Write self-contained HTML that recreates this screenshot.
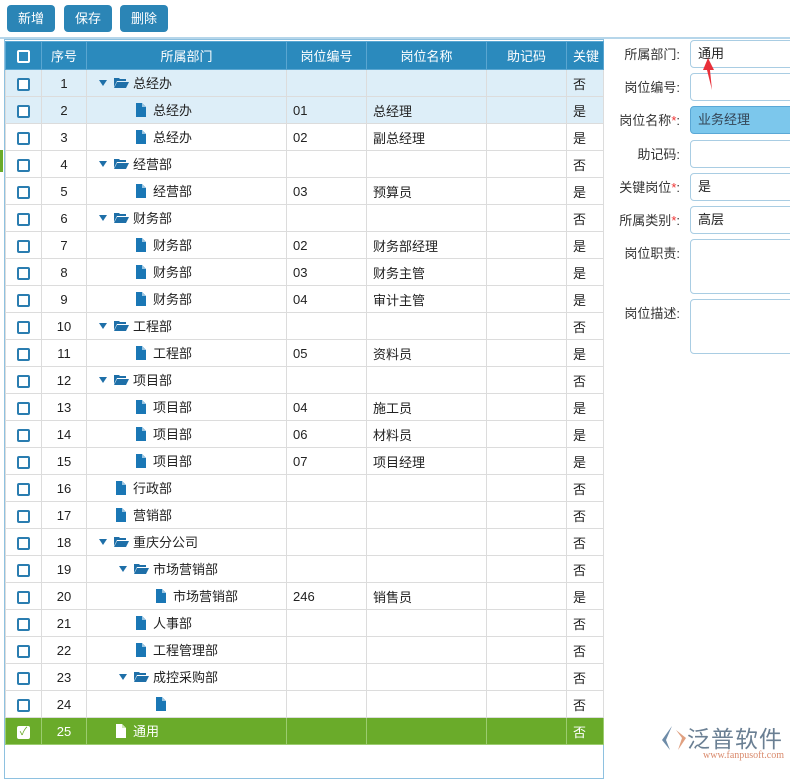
<!DOCTYPE html>
<html><head><meta charset="utf-8"><style>
*{box-sizing:border-box;margin:0;padding:0}
body{width:790px;height:771px;overflow:hidden;background:#fff;font-family:"Liberation Sans","Noto Sans CJK SC",sans-serif;font-size:13px;color:#222;position:relative}
.btn{position:absolute;top:5px;height:27px;width:48px;background:#2b85b6;color:#fff;border-radius:4px;text-align:center;line-height:27px;font-size:13px}
.topline{position:absolute;left:0;top:37px;width:790px;height:2px;background:#b6d6ea}
.panel{position:absolute;left:4px;top:39px;width:600px;height:740px;border:1px solid #8ec1e0}
table{position:absolute;left:5px;top:41px;border-collapse:collapse;table-layout:fixed;width:598px}
td,th{border:1px solid #dcdcdc;height:27px;padding:0;white-space:nowrap;overflow:hidden}
th{background:#2b8abd;color:#fff;font-weight:normal;height:28px;border-color:#5aa6d1}
td.c{text-align:center}
td.t{padding-left:6px}
.cb{display:inline-block;width:13px;height:13px;border:2px solid #2a7db0;border-radius:2px;vertical-align:middle;background:#fff}
th .cb{border-color:#fff;background:transparent}
tr.b td{background:#ddeef8}
tr.g td{background:#6aab2a;color:#fff;border-color:#9ccc70}
.d{position:relative}
.d span{position:absolute;top:0;line-height:27px}
.d span.x{top:6px;line-height:0}
.ar{width:0;height:0;border-left:4px solid transparent;border-right:4px solid transparent;border-top:6px solid #1e6fa8;top:10px!important}
.ar,.fo,.fi{display:block}
</style></head><body>
<div class="btn" style="left:7px">新增</div>
<div class="btn" style="left:64px">保存</div>
<div class="btn" style="left:120px">删除</div>
<div class="topline"></div>
<div style="position:absolute;left:0;top:150px;width:3px;height:22px;background:#6aab2a"></div>
<div class="panel"></div>
<table>
<colgroup><col style="width:36px"><col style="width:45px"><col style="width:200px"><col style="width:80px"><col style="width:120px"><col style="width:80px"><col style="width:37px"></colgroup>
<tr><th><span class="cb"></span></th><th>序号</th><th>所属部门</th><th>岗位编号</th><th>岗位名称</th><th>助记码</th><th style="text-align:left;padding-left:6px">关键</th></tr>
<tr class="b"><td class="c"><span class="cb"></span></td><td class="c">1</td><td class="d"><span class="ar" style="left:12px"></span><span class="x" style="left:27px;top:7px"><svg width="15" height="11"><path d="M0 1h5l1 1h6v2H3L0 10z M3 5h12l-3 6H0z" fill="#1e6fa8"/></svg></span><span style="left:46px">总经办</span></td><td></td><td></td><td></td><td class="t">否</td></tr>
<tr class="b"><td class="c"><span class="cb"></span></td><td class="c">2</td><td class="d"><span class="x" style="left:49px"><svg width="10" height="14"><path d="M0 0h6l4 4v10H0z" fill="#1a77b5"/><path d="M6 0v4h4" fill="#9cc6e2"/></svg></span><span style="left:66px">总经办</span></td><td class="t">01</td><td class="t">总经理</td><td></td><td class="t">是</td></tr>
<tr><td class="c"><span class="cb"></span></td><td class="c">3</td><td class="d"><span class="x" style="left:49px"><svg width="10" height="14"><path d="M0 0h6l4 4v10H0z" fill="#1a77b5"/><path d="M6 0v4h4" fill="#9cc6e2"/></svg></span><span style="left:66px">总经办</span></td><td class="t">02</td><td class="t">副总经理</td><td></td><td class="t">是</td></tr>
<tr><td class="c"><span class="cb"></span></td><td class="c">4</td><td class="d"><span class="ar" style="left:12px"></span><span class="x" style="left:27px;top:7px"><svg width="15" height="11"><path d="M0 1h5l1 1h6v2H3L0 10z M3 5h12l-3 6H0z" fill="#1e6fa8"/></svg></span><span style="left:46px">经营部</span></td><td></td><td></td><td></td><td class="t">否</td></tr>
<tr><td class="c"><span class="cb"></span></td><td class="c">5</td><td class="d"><span class="x" style="left:49px"><svg width="10" height="14"><path d="M0 0h6l4 4v10H0z" fill="#1a77b5"/><path d="M6 0v4h4" fill="#9cc6e2"/></svg></span><span style="left:66px">经营部</span></td><td class="t">03</td><td class="t">预算员</td><td></td><td class="t">是</td></tr>
<tr><td class="c"><span class="cb"></span></td><td class="c">6</td><td class="d"><span class="ar" style="left:12px"></span><span class="x" style="left:27px;top:7px"><svg width="15" height="11"><path d="M0 1h5l1 1h6v2H3L0 10z M3 5h12l-3 6H0z" fill="#1e6fa8"/></svg></span><span style="left:46px">财务部</span></td><td></td><td></td><td></td><td class="t">否</td></tr>
<tr><td class="c"><span class="cb"></span></td><td class="c">7</td><td class="d"><span class="x" style="left:49px"><svg width="10" height="14"><path d="M0 0h6l4 4v10H0z" fill="#1a77b5"/><path d="M6 0v4h4" fill="#9cc6e2"/></svg></span><span style="left:66px">财务部</span></td><td class="t">02</td><td class="t">财务部经理</td><td></td><td class="t">是</td></tr>
<tr><td class="c"><span class="cb"></span></td><td class="c">8</td><td class="d"><span class="x" style="left:49px"><svg width="10" height="14"><path d="M0 0h6l4 4v10H0z" fill="#1a77b5"/><path d="M6 0v4h4" fill="#9cc6e2"/></svg></span><span style="left:66px">财务部</span></td><td class="t">03</td><td class="t">财务主管</td><td></td><td class="t">是</td></tr>
<tr><td class="c"><span class="cb"></span></td><td class="c">9</td><td class="d"><span class="x" style="left:49px"><svg width="10" height="14"><path d="M0 0h6l4 4v10H0z" fill="#1a77b5"/><path d="M6 0v4h4" fill="#9cc6e2"/></svg></span><span style="left:66px">财务部</span></td><td class="t">04</td><td class="t">审计主管</td><td></td><td class="t">是</td></tr>
<tr><td class="c"><span class="cb"></span></td><td class="c">10</td><td class="d"><span class="ar" style="left:12px"></span><span class="x" style="left:27px;top:7px"><svg width="15" height="11"><path d="M0 1h5l1 1h6v2H3L0 10z M3 5h12l-3 6H0z" fill="#1e6fa8"/></svg></span><span style="left:46px">工程部</span></td><td></td><td></td><td></td><td class="t">否</td></tr>
<tr><td class="c"><span class="cb"></span></td><td class="c">11</td><td class="d"><span class="x" style="left:49px"><svg width="10" height="14"><path d="M0 0h6l4 4v10H0z" fill="#1a77b5"/><path d="M6 0v4h4" fill="#9cc6e2"/></svg></span><span style="left:66px">工程部</span></td><td class="t">05</td><td class="t">资料员</td><td></td><td class="t">是</td></tr>
<tr><td class="c"><span class="cb"></span></td><td class="c">12</td><td class="d"><span class="ar" style="left:12px"></span><span class="x" style="left:27px;top:7px"><svg width="15" height="11"><path d="M0 1h5l1 1h6v2H3L0 10z M3 5h12l-3 6H0z" fill="#1e6fa8"/></svg></span><span style="left:46px">项目部</span></td><td></td><td></td><td></td><td class="t">否</td></tr>
<tr><td class="c"><span class="cb"></span></td><td class="c">13</td><td class="d"><span class="x" style="left:49px"><svg width="10" height="14"><path d="M0 0h6l4 4v10H0z" fill="#1a77b5"/><path d="M6 0v4h4" fill="#9cc6e2"/></svg></span><span style="left:66px">项目部</span></td><td class="t">04</td><td class="t">施工员</td><td></td><td class="t">是</td></tr>
<tr><td class="c"><span class="cb"></span></td><td class="c">14</td><td class="d"><span class="x" style="left:49px"><svg width="10" height="14"><path d="M0 0h6l4 4v10H0z" fill="#1a77b5"/><path d="M6 0v4h4" fill="#9cc6e2"/></svg></span><span style="left:66px">项目部</span></td><td class="t">06</td><td class="t">材料员</td><td></td><td class="t">是</td></tr>
<tr><td class="c"><span class="cb"></span></td><td class="c">15</td><td class="d"><span class="x" style="left:49px"><svg width="10" height="14"><path d="M0 0h6l4 4v10H0z" fill="#1a77b5"/><path d="M6 0v4h4" fill="#9cc6e2"/></svg></span><span style="left:66px">项目部</span></td><td class="t">07</td><td class="t">项目经理</td><td></td><td class="t">是</td></tr>
<tr><td class="c"><span class="cb"></span></td><td class="c">16</td><td class="d"><span class="x" style="left:29px"><svg width="10" height="14"><path d="M0 0h6l4 4v10H0z" fill="#1a77b5"/><path d="M6 0v4h4" fill="#9cc6e2"/></svg></span><span style="left:46px">行政部</span></td><td></td><td></td><td></td><td class="t">否</td></tr>
<tr><td class="c"><span class="cb"></span></td><td class="c">17</td><td class="d"><span class="x" style="left:29px"><svg width="10" height="14"><path d="M0 0h6l4 4v10H0z" fill="#1a77b5"/><path d="M6 0v4h4" fill="#9cc6e2"/></svg></span><span style="left:46px">营销部</span></td><td></td><td></td><td></td><td class="t">否</td></tr>
<tr><td class="c"><span class="cb"></span></td><td class="c">18</td><td class="d"><span class="ar" style="left:12px"></span><span class="x" style="left:27px;top:7px"><svg width="15" height="11"><path d="M0 1h5l1 1h6v2H3L0 10z M3 5h12l-3 6H0z" fill="#1e6fa8"/></svg></span><span style="left:46px">重庆分公司</span></td><td></td><td></td><td></td><td class="t">否</td></tr>
<tr><td class="c"><span class="cb"></span></td><td class="c">19</td><td class="d"><span class="ar" style="left:32px"></span><span class="x" style="left:47px;top:7px"><svg width="15" height="11"><path d="M0 1h5l1 1h6v2H3L0 10z M3 5h12l-3 6H0z" fill="#1e6fa8"/></svg></span><span style="left:66px">市场营销部</span></td><td></td><td></td><td></td><td class="t">否</td></tr>
<tr><td class="c"><span class="cb"></span></td><td class="c">20</td><td class="d"><span class="x" style="left:69px"><svg width="10" height="14"><path d="M0 0h6l4 4v10H0z" fill="#1a77b5"/><path d="M6 0v4h4" fill="#9cc6e2"/></svg></span><span style="left:86px">市场营销部</span></td><td class="t">246</td><td class="t">销售员</td><td></td><td class="t">是</td></tr>
<tr><td class="c"><span class="cb"></span></td><td class="c">21</td><td class="d"><span class="x" style="left:49px"><svg width="10" height="14"><path d="M0 0h6l4 4v10H0z" fill="#1a77b5"/><path d="M6 0v4h4" fill="#9cc6e2"/></svg></span><span style="left:66px">人事部</span></td><td></td><td></td><td></td><td class="t">否</td></tr>
<tr><td class="c"><span class="cb"></span></td><td class="c">22</td><td class="d"><span class="x" style="left:49px"><svg width="10" height="14"><path d="M0 0h6l4 4v10H0z" fill="#1a77b5"/><path d="M6 0v4h4" fill="#9cc6e2"/></svg></span><span style="left:66px">工程管理部</span></td><td></td><td></td><td></td><td class="t">否</td></tr>
<tr><td class="c"><span class="cb"></span></td><td class="c">23</td><td class="d"><span class="ar" style="left:32px"></span><span class="x" style="left:47px;top:7px"><svg width="15" height="11"><path d="M0 1h5l1 1h6v2H3L0 10z M3 5h12l-3 6H0z" fill="#1e6fa8"/></svg></span><span style="left:66px">成控采购部</span></td><td></td><td></td><td></td><td class="t">否</td></tr>
<tr><td class="c"><span class="cb"></span></td><td class="c">24</td><td class="d"><span class="x" style="left:69px"><svg width="10" height="14"><path d="M0 0h6l4 4v10H0z" fill="#1a77b5"/><path d="M6 0v4h4" fill="#9cc6e2"/></svg></span></td><td></td><td></td><td></td><td class="t">否</td></tr>
<tr class="g"><td class="c"><span class="cb" style="border-color:#fff;border-width:1px;color:#6aab2a;font-size:11px;line-height:11px">✓</span></td><td class="c">25</td><td class="d"><span class="x" style="left:29px"><svg width="10" height="14"><path d="M0 0h6l4 4v10H0z" fill="#fff"/><path d="M6 0v4h4" fill="#cfe6b8"/></svg></span><span style="left:46px">通用</span></td><td></td><td></td><td></td><td class="t">否</td></tr>
</table>
<style>
.lb{position:absolute;right:110px;width:90px;text-align:right;font-size:13px;color:#333}
.lb i{color:#e33;font-style:normal}
.in{position:absolute;left:690px;width:110px;border:1px solid #a9cde3;border-radius:4px;background:#fff;padding-left:7px;font-size:13px}
</style>
<div class="lb" style="top:44px">所属部门:</div><div class="in" style="top:40px;height:28px;line-height:26px">通用</div>
<div class="lb" style="top:77px">岗位编号:</div><div class="in" style="top:73px;height:28px"></div>
<div class="lb" style="top:110px">岗位名称<i>*</i>:</div><div class="in" style="top:106px;height:28px;line-height:26px;background:#7cc7ec;border-color:#5aa8d6;color:#345">业务经理</div>
<div class="lb" style="top:144px">助记码:</div><div class="in" style="top:140px;height:28px"></div>
<div class="lb" style="top:177px">关键岗位<i>*</i>:</div><div class="in" style="top:173px;height:28px;line-height:26px">是</div>
<div class="lb" style="top:210px">所属类别<i>*</i>:</div><div class="in" style="top:206px;height:28px;line-height:26px">高层</div>
<div class="lb" style="top:243px">岗位职责:</div><div class="in" style="top:239px;height:55px"></div>
<div class="lb" style="top:303px">岗位描述:</div><div class="in" style="top:299px;height:55px"></div>
<svg style="position:absolute;left:702px;top:58px" width="14" height="34"><path d="M6 0L1 12h4l5 20L8 12h4z" fill="#e8303a"/></svg>
<div style="position:absolute;left:660px;top:722px;width:130px;height:40px">
<svg style="position:absolute;left:0;top:4px" width="28" height="26"><path d="M12 0L2 14l8 10L6 14z" fill="#6e8ca8"/><path d="M16 4l10 8-8 12 4-12z" fill="#e0a080"/></svg>
<div style="position:absolute;left:27px;top:0;font-size:23px;color:#6a7f93;letter-spacing:1px;font-family:'Noto Sans CJK SC',sans-serif;line-height:30px">泛普软件</div>
<div style="position:absolute;left:43px;top:28px;font-size:10px;color:#d98a6c;font-family:'Liberation Serif',serif">www.fanpusoft.com</div>
</div>
</body></html>
